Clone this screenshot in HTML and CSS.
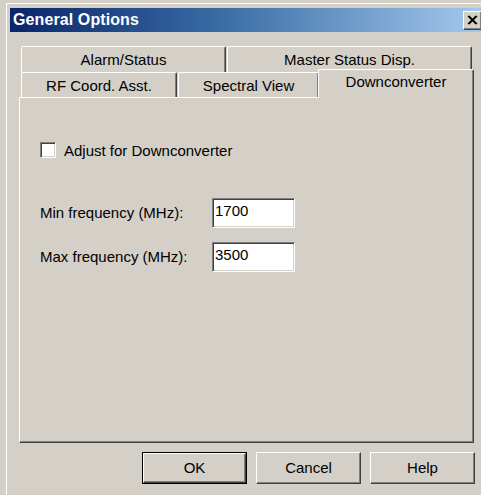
FILE: index.html
```html
<!DOCTYPE html>
<html>
<head>
<meta charset="utf-8">
<title>General Options</title>
<link rel="stylesheet" href="styles.css">
</head>
<body>
<div class="window">
  <div class="titlebar">
    <span class="title">General Options</span>
    <span class="close" aria-label="Close">
      <svg width="11" height="10" viewBox="0 0 11 10"><path d="M1 1 L9 9 M2 1 L10 9 M9 1 L1 9 M10 1 L2 9" stroke="#000" stroke-width="1.2" fill="none"/></svg>
    </span>
  </div>
  <div class="client">
    <div class="tabctl">
      <div class="tabrow back">
        <div class="tab t-alarm">Alarm/Status</div>
        <div class="tab t-master">Master Status Disp.</div>
      </div>
      <div class="tabrow front">
        <div class="tab t-rf">RF Coord. Asst.</div>
        <div class="tab t-spec">Spectral View</div>
        <div class="tab t-down selected">Downconverter</div>
      </div>
      <div class="panel">
        <label class="check-row">
          <span class="checkbox"></span>
          <span class="check-label">Adjust for Downconverter</span>
        </label>
        <div class="field-row first">
          <span class="field-label">Min frequency (MHz):</span>
          <span class="field">1700</span>
        </div>
        <div class="field-row">
          <span class="field-label">Max frequency (MHz):</span>
          <span class="field">3500</span>
        </div>
      </div>
    </div>
    <div class="buttons">
      <span class="btn default"><span class="btn-face">OK</span></span>
      <span class="btn"><span class="btn-face">Cancel</span></span>
      <span class="btn"><span class="btn-face">Help</span></span>
    </div>
  </div>
</div>
</body>
</html>
```
FILE: styles.css
```css
html, body {
  margin: 0;
  padding: 0;
  background: #d4d0c8;
  overflow: hidden;
  width: 481px;
  height: 495px;
}

body {
  font-family: "Liberation Sans", Arial, sans-serif;
  font-size: 15px;
  color: #000;
}

.window {
  margin: 3px 0 0 6px;
  width: 480px;
  height: 500px;
  border-top: 1px solid #ffffff;
  border-left: 1px solid #ffffff;
  padding: 4px 0 0 3px;
  box-sizing: border-box;
}

/* caption */
.titlebar {
  height: 24px;
  display: flex;
  align-items: center;
  justify-content: space-between;
  background: linear-gradient(to right, #0a246a 0%, #3a6ea5 45%, #a6caf0 100%);
  padding: 0 4px 0 3px;
}

.title {
  color: #fff;
  font-weight: bold;
  font-size: 16px;
  line-height: 24px;
  letter-spacing: 0.1px;
}

.close {
  width: 19px;
  height: 19px;
  box-sizing: border-box;
  background: #d4d0c8;
  border-top: 1px solid #fff;
  border-left: 1px solid #fff;
  border-right: 1px solid #404040;
  border-bottom: 1px solid #404040;
  box-shadow: inset -1px -1px #808080;
  display: flex;
  align-items: center;
  justify-content: center;
}

.close svg { display: block; margin: 0 1px 1px 0; }

/* tab control */
.client {
  padding: 14px 0 0 9px;
}

.tabctl {
  width: 455px;
}

.tabrow {
  display: flex;
  align-items: flex-end;
  padding-left: 2px;
}

.tabrow.back { height: 26px; }
.tabrow.front { height: 25px; position: relative; z-index: 1; }

.tab {
  box-sizing: border-box;
  border-top: 1px solid #fff;
  border-left: 1px solid #fff;
  border-right: 1px solid #404040;
  box-shadow: inset -1px 0 #808080;
  border-radius: 2px 2px 0 0;
  text-align: center;
  background: #d4d0c8;
}

.back .tab { height: 26px; line-height: 25px; }
.front .tab { height: 25px; line-height: 26px; }

.t-alarm { width: 205px; }
.t-master { width: 245px; margin-left: 1px; }
.t-rf { width: 156px; }
.t-spec { width: 141px; margin-left: 1px; }

.front .tab.selected {
  width: 156px;
  height: 29px;
  margin-bottom: -1px;
  margin-left: -1px;
  line-height: 24px;
  border-bottom: 0;
}

.panel {
  box-sizing: border-box;
  height: 346px;
  border-top: 1px solid #fff;
  border-left: 1px solid #fff;
  border-right: 1px solid #404040;
  border-bottom: 1px solid #404040;
  box-shadow: inset -1px -1px #808080;
  padding: 43px 0 0 20px;
}

.check-row {
  display: flex;
  align-items: center;
  height: 17px;
}

.checkbox {
  width: 16px;
  height: 16px;
  box-sizing: border-box;
  background: #fff;
  border-top: 1px solid #808080;
  border-left: 1px solid #808080;
  border-right: 1px solid #fff;
  border-bottom: 1px solid #fff;
  box-shadow: inset 1px 1px #404040, inset -1px -1px #d4d0c8;
}

.check-label {
  margin-left: 8px;
  margin-top: 1px;
}

.field-row {
  display: flex;
  align-items: center;
  margin-top: 14px;
}

.field-row.first { margin-top: 40px; }

.field-label {
  width: 172px;
  margin-top: -2px;
}

.field {
  box-sizing: border-box;
  width: 83px;
  height: 30px;
  background: #fff;
  border-top: 1px solid #808080;
  border-left: 1px solid #808080;
  border-right: 1px solid #fff;
  border-bottom: 1px solid #fff;
  box-shadow: inset 1px 1px #404040, inset -1px -1px #d4d0c8;
  padding: 3px 0 0 2px;
  line-height: 18px;
}

/* dialog buttons */
.buttons {
  width: 456px;
  display: flex;
  justify-content: flex-end;
  gap: 9px;
  margin-top: 9px;
}

.btn {
  box-sizing: border-box;
  width: 105px;
  height: 32px;
  display: flex;
}

.btn-face {
  flex: 1;
  box-sizing: border-box;
  border-top: 1px solid #fff;
  border-left: 1px solid #fff;
  border-right: 1px solid #404040;
  border-bottom: 1px solid #404040;
  box-shadow: inset -1px -1px #808080;
  display: flex;
  align-items: center;
  justify-content: center;
  padding-bottom: 1px;
}

.btn.default {
  border: 1px solid #000;
}
```
